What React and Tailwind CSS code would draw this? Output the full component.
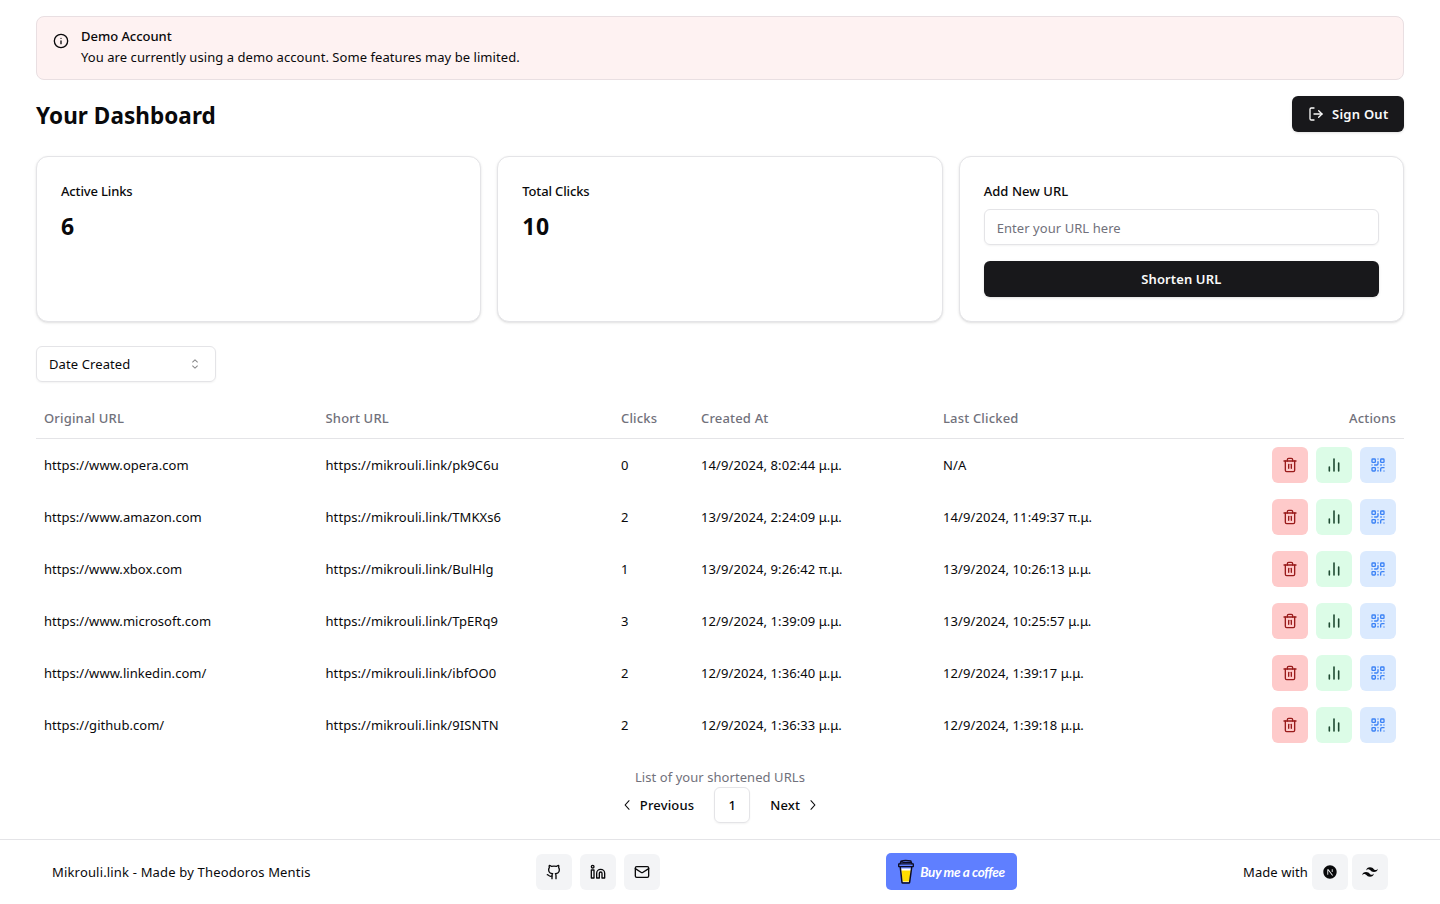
import React from "react";
import {
  ChartNoAxesColumn,
  Github,
  Info,
  Linkedin,
  LogOut,
  Mail,
  QrCode,
  Trash2,
} from "lucide-react";
import { RxCaretSort, RxChevronLeft, RxChevronRight } from "react-icons/rx";
import { RiNextjsFill, RiTailwindCssFill } from "react-icons/ri";

const links = [
  ["https://www.opera.com", "https://mikrouli.link/pk9C6u", "0", "14/9/2024, 8:02:44 μ.μ.", "N/A"],
  ["https://www.amazon.com", "https://mikrouli.link/TMKXs6", "2", "13/9/2024, 2:24:09 μ.μ.", "14/9/2024, 11:49:37 π.μ."],
  ["https://www.xbox.com", "https://mikrouli.link/BulHlg", "1", "13/9/2024, 9:26:42 π.μ.", "13/9/2024, 10:26:13 μ.μ."],
  ["https://www.microsoft.com", "https://mikrouli.link/TpERq9", "3", "12/9/2024, 1:39:09 μ.μ.", "13/9/2024, 10:25:57 μ.μ."],
  ["https://www.linkedin.com/", "https://mikrouli.link/ibfOO0", "2", "12/9/2024, 1:36:40 μ.μ.", "12/9/2024, 1:39:17 μ.μ."],
  ["https://github.com/", "https://mikrouli.link/9ISNTN", "2", "12/9/2024, 1:36:33 μ.μ.", "12/9/2024, 1:39:18 μ.μ."],
];

function StatCard({ title, value }) {
  return (
    <div className="rounded-xl border border-zinc-200 bg-white p-6 shadow-sm">
      <h3 className="text-[13px] leading-5 font-medium tracking-[-0.15px]">{title}</h3>
      <p className="mt-[9px] text-[23px] leading-8 font-bold tracking-[0.4px]">{value}</p>
    </div>
  );
}

function IconTile({ className = "bg-gray-100", children }) {
  return (
    <button className={`flex size-9 items-center justify-center rounded-md ${className}`}>
      {children}
    </button>
  );
}

function HeadCell({ className = "", children }) {
  return (
    <th className={`h-[41px] border-b border-zinc-200 px-2 font-medium tracking-[0.17px] ${className}`}>
      {children}
    </th>
  );
}

function CoffeeButton() {
  return (
    <button className="mb-px flex h-[37px] w-[131px] items-center rounded-[5px] bg-[#5f7fff] pl-[11px]">
      <svg width="18" height="26" viewBox="0 0 18 26" fill="none" className="shrink-0">
        <path d="M3.6 9.5h10.8L12.8 23H5.2z" fill="#fff" />
        <path d="M4.3 11.5h9.6L12.4 22.6H5.6z" fill="#ffdd00" />
        <path d="M3.2 7.5 5 23.3q.1.7.8.7h6q.7 0 .8-.7L14.8 7.5" stroke="#0d0c22" strokeWidth="1.5" strokeLinejoin="round" />
        <path d="M1.7 4.9h14.6v2.7H1.7z" fill="#5f7fff" stroke="#0d0c22" strokeWidth="1.3" strokeLinejoin="round" />
        <path d="M3 4.7 4 2.1q3.6-1.2 9.8-.2l1.2 2.8M4 2.9q4 1 10 .2" stroke="#0d0c22" strokeWidth="1.2" strokeLinecap="round" />
      </svg>
      <span className="ml-[5px] font-['Lato',sans-serif] text-[13.5px] leading-7 font-bold tracking-[-0.35px] whitespace-nowrap text-white italic">
        Buy me a coffee
      </span>
    </button>
  );
}

export default function App() {
  return (
    <div className="flex h-[904px] flex-col overflow-hidden bg-white font-['Noto_Sans',sans-serif] text-[13px] leading-5 tracking-[0.06px] text-zinc-950">
      <main className="flex-1 px-9 pt-4">
        <div className="flex h-16 gap-3 rounded-lg border border-[#e9dfe2] bg-[#fef2f2] px-4">
          <Info className="mt-4 size-4" />
          <div className="pt-[9px]">
            <h5 className="leading-5 font-medium tracking-[-0.04px]">Demo Account</h5>
            <p className="mt-px leading-5">
              You are currently using a demo account. Some features may be limited.
            </p>
          </div>
        </div>

        <div className="mt-4 flex h-9 items-center justify-between">
          <h1 className="pt-1 text-[22.5px] leading-8 font-bold">Your Dashboard</h1>
          <button className="flex h-9 w-28 items-center rounded-md bg-zinc-900 pl-4 font-semibold tracking-[0.25px] text-zinc-50 shadow-sm">
            <LogOut className="mr-2 size-4" />
            Sign Out
          </button>
        </div>

        <div className="mt-6 grid h-[166px] grid-cols-3 gap-4">
          <StatCard title="Active Links" value="6" />
          <StatCard title="Total Clicks" value="10" />
          <div className="rounded-xl border border-zinc-200 bg-white p-6 shadow-sm">
            <h3 className="leading-5 font-medium tracking-[0.06px]">Add New URL</h3>
            <input
              className="mt-2 block h-9 w-full rounded-md border border-zinc-200 px-3 pt-0.5 shadow-xs placeholder:text-zinc-500"
              placeholder="Enter your URL here"
            />
            <button className="mt-4 block h-9 w-full rounded-md bg-zinc-900 font-semibold tracking-[0.12px] text-zinc-50 shadow-sm">
              Shorten URL
            </button>
          </div>
        </div>

        <button className="mt-6 flex h-9 w-[180px] items-center justify-between rounded-md border border-zinc-200 px-3 tracking-[0.1px] shadow-xs">
          Date Created
          <RxCaretSort className="size-4 opacity-50" />
        </button>

        <table className="mt-4 w-full table-fixed border-separate border-spacing-0 text-left">
          <thead className="text-zinc-500">
            <tr>
              <HeadCell className="w-[281.5px]">Original URL</HeadCell>
              <HeadCell className="w-[295.5px]">Short URL</HeadCell>
              <HeadCell className="w-20">Clicks</HeadCell>
              <HeadCell className="w-[242px]">Created At</HeadCell>
              <HeadCell>Last Clicked</HeadCell>
              <HeadCell className="w-40 text-right">Actions</HeadCell>
            </tr>
          </thead>
          <tbody>
            {links.map(([original, short, clicks, created, last]) => (
              <tr key={short} className="h-[52px]">
                <td className="px-2 tracking-[0.04px]">{original}</td>
                <td className="px-2 tracking-[0.08px]">{short}</td>
                <td className="px-2">{clicks}</td>
                <td className="px-2 tracking-[0.09px]">{created}</td>
                <td className="px-2 tracking-[0.09px]">{last}</td>
                <td className="px-2">
                  <div className="flex justify-end gap-2">
                    <IconTile className="bg-[#fecaca] text-[#991b1b]">
                      <Trash2 className="size-4" />
                    </IconTile>
                    <IconTile className="bg-[#dcfce7] text-[#1f4a32]">
                      <ChartNoAxesColumn className="size-4" strokeWidth={2.4} />
                    </IconTile>
                    <IconTile className="bg-[#dbeafe] text-[#3b82f6]">
                      <QrCode className="size-4" />
                    </IconTile>
                  </div>
                </td>
              </tr>
            ))}
          </tbody>
        </table>
        <p className="mt-4 text-center text-zinc-500">List of your shortened URLs</p>

        <nav className="flex h-9 items-center justify-center gap-1 font-medium">
          <button className="flex h-9 items-center gap-1 pr-4 pl-2.5 tracking-[0.15px]">
            <RxChevronLeft className="size-4" />
            Previous
          </button>
          <button className="size-9 rounded-md border border-zinc-200 shadow-xs">1</button>
          <button className="flex h-9 items-center gap-1 pr-2.5 pl-4 tracking-[0.15px]">
            Next
            <RxChevronRight className="size-4" />
          </button>
        </nav>
      </main>

      <footer className="flex h-[65px] items-center justify-between border-t border-zinc-200 px-[52px]">
        <p className="tracking-[0.17px]">Mikrouli.link - Made by Theodoros Mentis</p>
        <div className="flex gap-2">
          <IconTile>
            <Github className="size-4" />
          </IconTile>
          <IconTile>
            <Linkedin className="size-4" />
          </IconTile>
          <IconTile>
            <Mail className="size-4" />
          </IconTile>
        </div>
        <CoffeeButton />
        <div className="flex items-center gap-1">
          <span className="tracking-[0.1px]">Made with</span>
          <IconTile>
            <RiNextjsFill className="size-4" />
          </IconTile>
          <IconTile>
            <RiTailwindCssFill className="size-4" />
          </IconTile>
        </div>
      </footer>
    </div>
  );
}
